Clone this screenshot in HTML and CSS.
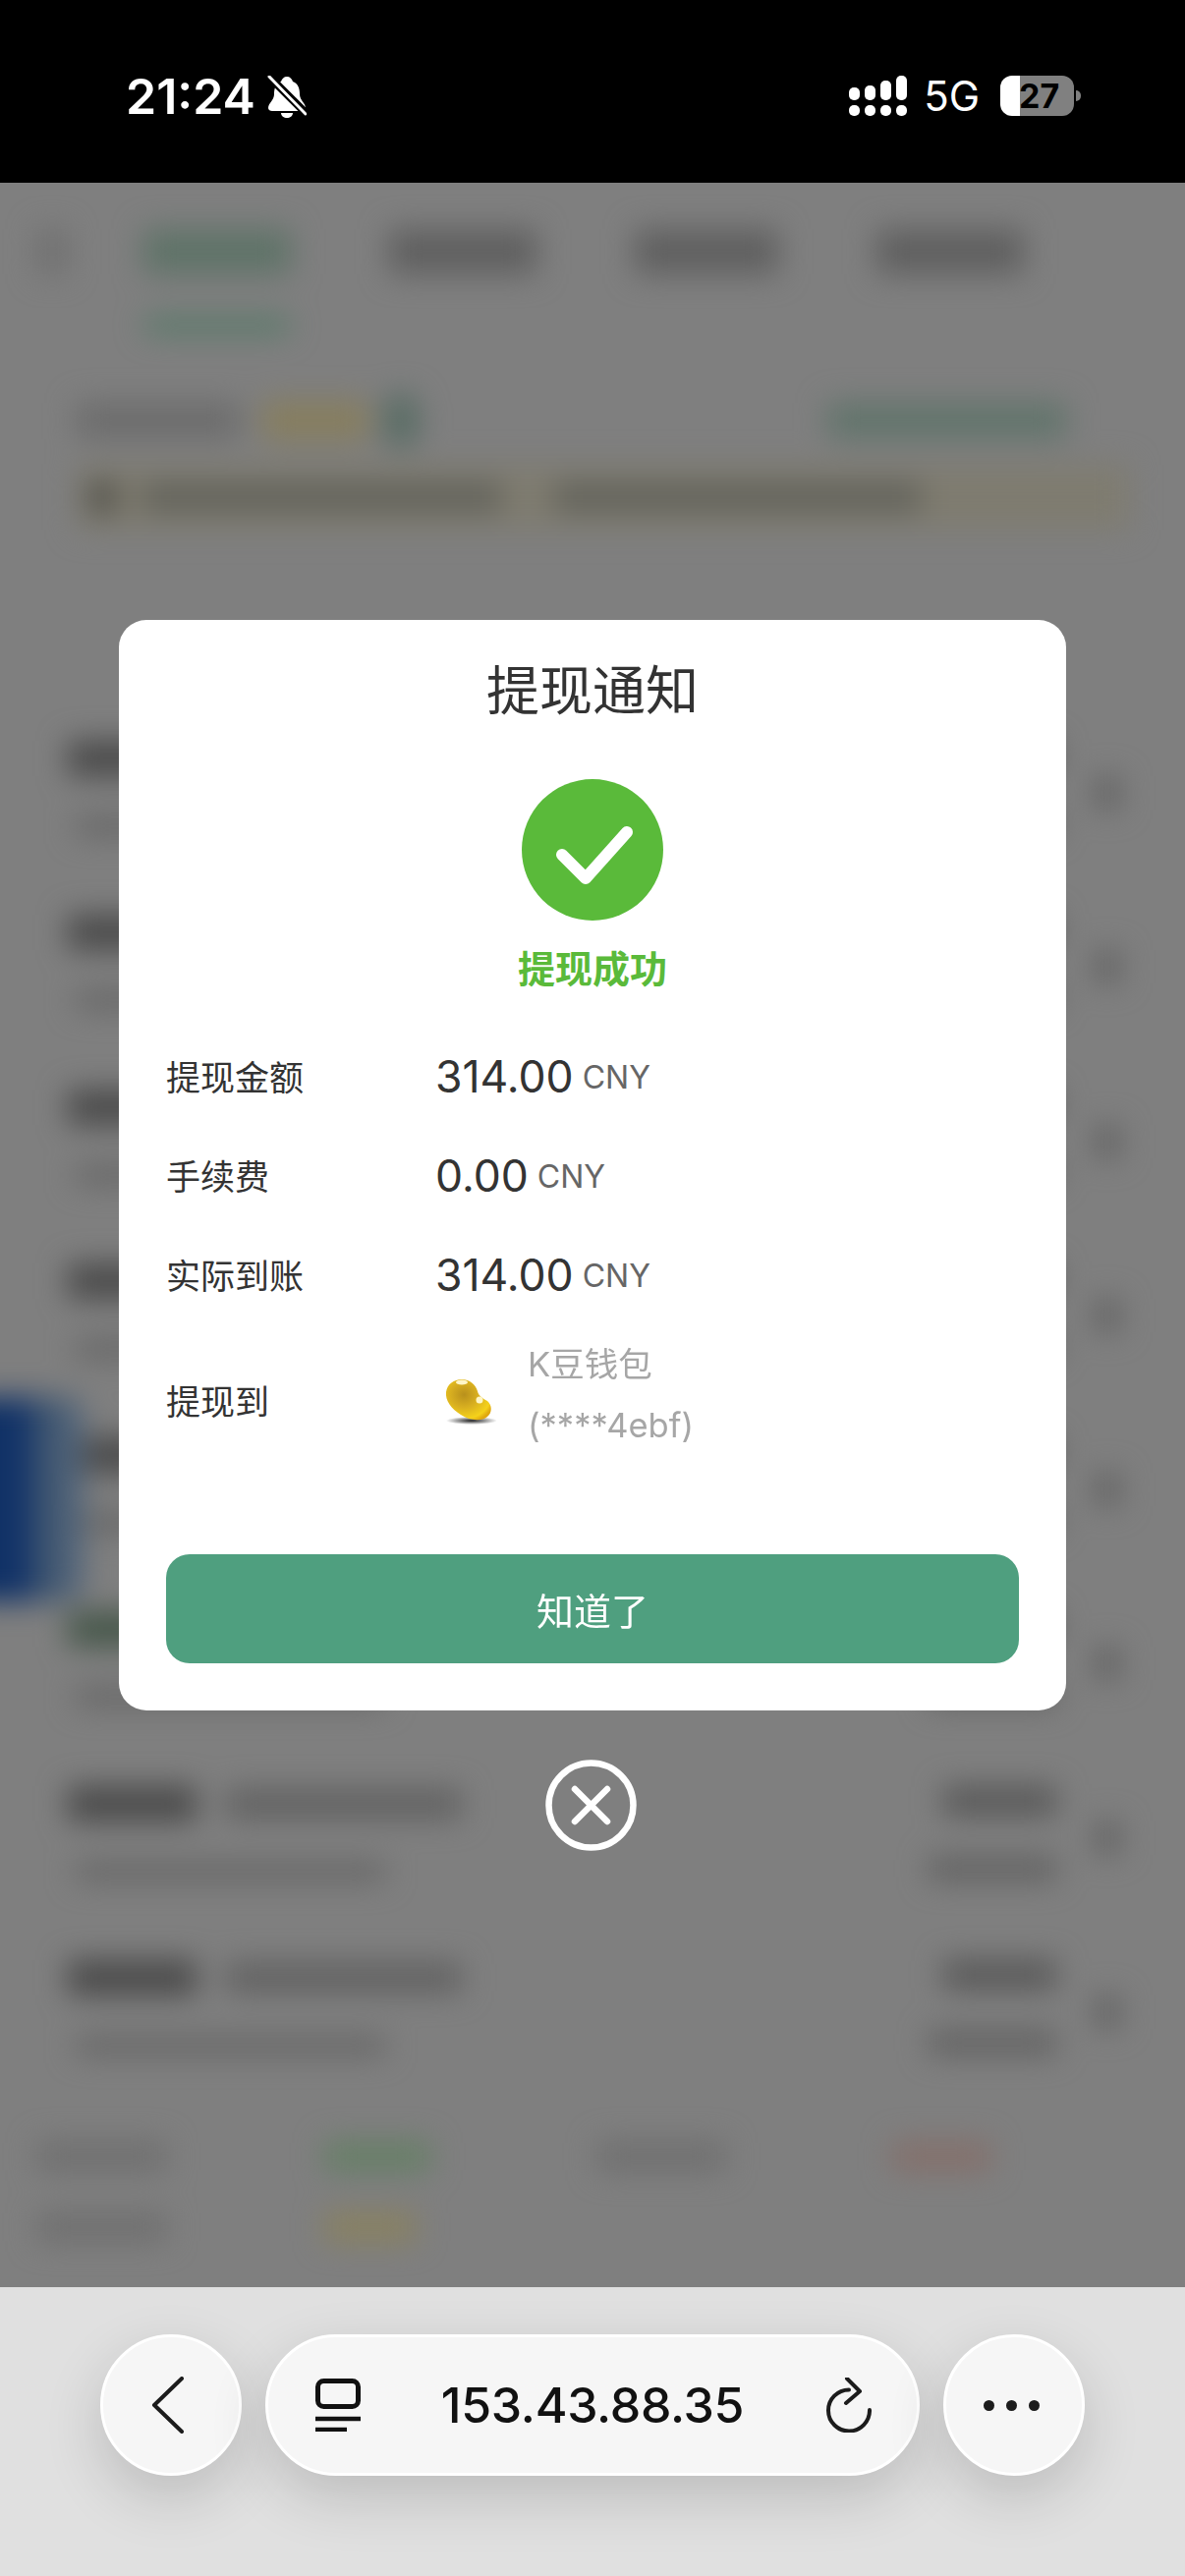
FILE: index.html
```html
<!DOCTYPE html>
<html lang="zh-CN">
    <head>
        <meta charset="UTF-8" />
        <meta name="viewport" content="width=device-width, initial-scale=1.0" />
        <title>提现通知</title>
        <link rel="stylesheet" href="styles.css">
    </head>
    <body>
        <header class="status-bar">
            <div class="status-left">
                <span class="clock">21:24</span>
                <svg class="bell" viewBox="0 0 40 43" width="40" height="43">
                    <path d="M20 1c3 0 5 2 6 5 6 2 7 8 7 13 0 6 6 9 6 14 0 2-2 3-4 3H5c-2 0-4-1-4-3 0-5 6-8 6-14 0-5 1-11 7-13 1-3 3-5 6-5z" fill="#fff"/>
                    <path d="M14 38h12c0 3-3 5-6 5s-6-2-6-5z" fill="#fff"/>
                    <path d="M1 0l39 39" stroke="#000" stroke-width="8"/>
                    <path d="M2 1l37 38" stroke="#fff" stroke-width="3" stroke-linecap="round"/>
                </svg>
            </div>
            <div class="status-right">
                <div class="signal">
                    <span class="signal-col"><i class="bar-1"></i><i class="dot"></i></span>
                    <span class="signal-col"><i class="bar-2"></i><i class="dot"></i></span>
                    <span class="signal-col"><i class="bar-3"></i><i class="dot"></i></span>
                    <span class="signal-col"><i class="bar-4"></i><i class="dot"></i></span>
                </div>
                <span class="network">5G</span>
                <div class="battery"><span class="battery-level">27</span></div>
                <span class="battery-nub"></span>
            </div>
        </header>

        <main class="page">
            <!-- page content dimmed and blurred behind the dialog -->
            <div class="backdrop">
                <div class="tabs">
                    <span class="tab-menu"></span>
                    <div class="tab tab-active"><span class="tab-label"></span><span class="tab-line"></span></div>
                    <div class="tab"><span class="tab-label"></span></div>
                    <div class="tab tab-short"><span class="tab-label"></span></div>
                    <div class="tab"><span class="tab-label"></span></div>
                </div>
                <section class="summary">
                    <div class="summary-head">
                        <span class="sk sk-name"></span>
                        <span class="sk sk-gold"></span>
                        <span class="sk sk-leaf"></span>
                        <span class="sk sk-link"></span>
                    </div>
                    <div class="notice">
                        <span class="sk notice-icon"></span>
                        <span class="sk notice-a"></span>
                        <span class="sk notice-b"></span>
                    </div>
                </section>
                <section class="records">
                    <div class="record"><div class="record-main"><div class="record-title"><span class="sk title-a"></span><span class="sk title-b"></span></div><span class="sk record-sub"></span></div><div class="record-side"><span class="sk side-a"></span><span class="sk side-b"></span></div><span class="sk record-arrow"></span></div>
                    <div class="record"><div class="record-main"><div class="record-title"><span class="sk title-a"></span><span class="sk title-b"></span></div><span class="sk record-sub"></span></div><div class="record-side"><span class="sk side-a"></span><span class="sk side-b"></span></div><span class="sk record-arrow"></span></div>
                    <div class="record"><div class="record-main"><div class="record-title"><span class="sk title-a"></span><span class="sk title-b"></span></div><span class="sk record-sub"></span></div><div class="record-side"><span class="sk side-a"></span><span class="sk side-b"></span></div><span class="sk record-arrow"></span></div>
                    <div class="record"><div class="record-main"><div class="record-title"><span class="sk title-a"></span><span class="sk title-b"></span></div><span class="sk record-sub"></span></div><div class="record-side"><span class="sk side-a"></span><span class="sk side-b"></span></div><span class="sk record-arrow"></span></div>
                    <div class="record"><div class="record-main"><div class="record-title"><span class="sk title-a"></span><span class="sk title-b"></span></div><span class="sk record-sub"></span></div><div class="record-side"><span class="sk side-a"></span><span class="sk side-b"></span></div><span class="sk record-arrow"></span></div>
                    <div class="record"><div class="record-main"><div class="record-title"><span class="sk title-a title-green"></span><span class="sk title-b"></span></div><span class="sk record-sub"></span></div><div class="record-side"><span class="sk side-a"></span><span class="sk side-b"></span></div><span class="sk record-arrow"></span></div>
                    <div class="record"><div class="record-main"><div class="record-title"><span class="sk title-a"></span><span class="sk title-b"></span></div><span class="sk record-sub"></span></div><div class="record-side"><span class="sk side-a"></span><span class="sk side-b"></span></div><span class="sk record-arrow"></span></div>
                    <div class="record"><div class="record-main"><div class="record-title"><span class="sk title-a"></span><span class="sk title-b"></span></div><span class="sk record-sub"></span></div><div class="record-side"><span class="sk side-a"></span><span class="sk side-b"></span></div><span class="sk record-arrow"></span></div>
                </section>
                <section class="legend">
                    <div class="legend-row">
                        <span class="sk legend-key"></span>
                        <span class="sk legend-green"></span>
                        <span class="sk legend-key2"></span>
                        <span class="sk legend-red"></span>
                    </div>
                    <div class="legend-row">
                        <span class="sk legend-key"></span>
                        <span class="sk legend-orange"></span>
                    </div>
                </section>
                <!-- floating service button at the screen edge -->
                <div class="float-tab"></div>
            </div>

            <div class="overlay">
                <div class="dialog">
                    <h2 class="dialog-title">提现通知</h2>
                    <svg class="success-icon" viewBox="0 0 144 144" width="144" height="144">
                        <circle cx="72" cy="72" r="72" fill="#5aba3a"/>
                        <path d="M41 77l24 24 42-47" fill="none" stroke="#fff" stroke-width="12" stroke-linecap="round" stroke-linejoin="round"/>
                    </svg>
                    <div class="success-text">提现成功</div>
                    <dl class="details">
                        <dt>提现金额</dt>
                        <dd><span class="amount">314.00</span><span class="unit">CNY</span></dd>
                        <dt>手续费</dt>
                        <dd><span class="amount">0.00</span><span class="unit">CNY</span></dd>
                        <dt>实际到账</dt>
                        <dd><span class="amount">314.00</span><span class="unit">CNY</span></dd>
                        <dt>提现到</dt>
                        <dd class="wallet">
                            <svg class="bean" viewBox="0 0 52 47" width="52" height="47">
                                <defs>
                                    <radialGradient id="beanFill" cx="40%" cy="38%" r="70%">
                                        <stop offset="0" stop-color="#b8901c"/>
                                        <stop offset="0.45" stop-color="#d9b020"/>
                                        <stop offset="0.85" stop-color="#f5d21a"/>
                                        <stop offset="1" stop-color="#e0a810"/>
                                    </radialGradient>
                                    <radialGradient id="beanShadow">
                                        <stop offset="0" stop-color="#222"/>
                                        <stop offset="1" stop-color="#222" stop-opacity="0"/>
                                    </radialGradient>
                                </defs>
                                <ellipse cx="27" cy="43" rx="26" ry="4" fill="url(#beanShadow)"/>
                                <path d="M17 1C25 1 31 6 33 13c1 5 5 7 10 10 5 4 5 12 0 16-6 5-18 4-27-2C6 31 0 22 1 14 2 6 9 1 17 1z" fill="url(#beanFill)"/>
                                <ellipse cx="17" cy="4" rx="6" ry="2.5" fill="#fff6c8"/>
                                <circle cx="35" cy="22" r="3.5" fill="#fff6c8"/>
                            </svg>
                            <span class="wallet-name">K豆钱包<br>(****4ebf)</span>
                        </dd>
                    </dl>
                    <button class="confirm">知道了</button>
                </div>
                <button class="close" aria-label="关闭">
                    <svg viewBox="0 0 93 93" width="93" height="93">
                        <circle cx="46.5" cy="46.5" r="43" fill="none" stroke="#fff" stroke-width="6.5"/>
                        <path d="M30 30l33 33M63 30L30 63" stroke="#fff" stroke-width="6.5" stroke-linecap="round"/>
                    </svg>
                </button>
            </div>
        </main>

        <nav class="browser-bar">
            <button class="round-btn">
                <svg class="back-icon" viewBox="0 0 34 58" width="34" height="58"><path d="M31 2L3 29l28 27" fill="none" stroke="#1c1c1c" stroke-width="4" stroke-linecap="round" stroke-linejoin="round"/></svg>
            </button>
            <div class="url-pill">
                <svg viewBox="0 0 46 54" width="46" height="54">
                    <rect x="2.5" y="2.5" width="41" height="26" rx="6" fill="none" stroke="#111" stroke-width="5"/>
                    <path d="M0 41h46" stroke="#111" stroke-width="4.5"/>
                    <path d="M0 52h32" stroke="#111" stroke-width="4.5"/>
                </svg>
                <span class="url-text">153.43.88.35</span>
                <svg viewBox="0 0 46 56" width="46" height="56">
                    <path d="M23 12.500A21 21 0 1 0 44 33" fill="none" stroke="#1c1c1c" stroke-width="4" stroke-linecap="round"/>
                    <path d="M21 1l13 13-14 12" fill="none" stroke="#1c1c1c" stroke-width="4" stroke-linecap="round" stroke-linejoin="round"/>
                </svg>
            </div>
            <button class="round-btn more-btn">
                <span class="more-dot"></span><span class="more-dot"></span><span class="more-dot"></span>
            </button>
        </nav>
    </body>
</html>
```

FILE: styles.css
```css
body {
    margin: 0;
    width: 1206px;
    height: 2622px;
    display: flex;
    flex-direction: column;
    overflow: hidden;
    font-family: Inter, "Noto Sans CJK SC", sans-serif;
    background: #808080;
}

/* status bar */
.status-bar {
    height: 186px;
    flex: none;
    background: #000;
    color: #fff;
    display: flex;
    justify-content: space-between;
    align-items: flex-start;
    padding: 77px 106px 0 128px;
    box-sizing: border-box;
}
.status-left {
    display: flex;
    align-items: center;
    gap: 12px;
}
.clock {
    font-size: 50px;
    font-weight: 600;
    line-height: 43px;
}
.status-right {
    display: flex;
    align-items: center;
    height: 41px;
}
.signal {
    display: flex;
    gap: 5px;
    margin-right: 17px;
}
.signal-col {
    width: 11px;
    height: 41px;
    display: flex;
    flex-direction: column;
    justify-content: flex-end;
    gap: 5px;
}
.signal-col i {
    display: block;
    background: #fff;
    border-radius: 5px;
}
.signal-col .dot { height: 11px; }
.signal-col .bar-1 { height: 13px; }
.signal-col .bar-2 { height: 15px; }
.signal-col .bar-3 { height: 20px; }
.signal-col .bar-4 { height: 25px; }
.network {
    font-size: 42px;
    font-weight: 400;
    margin-right: 21px;
}
.battery {
    width: 75px;
    height: 41px;
    border-radius: 12px;
    background: linear-gradient(90deg, #fff 0, #fff 20px, #808080 20px);
    color: #000;
    display: flex;
    align-items: center;
    padding-left: 19px;
    box-sizing: border-box;
}
.battery-level {
    font-size: 34px;
    font-weight: 700;
}
.battery-nub {
    width: 5px;
    height: 11px;
    margin-left: 2px;
    background: #808080;
    border-radius: 0 6px 6px 0;
}

/* dimmed page behind the dialog */
.page {
    flex: 1;
    position: relative;
    overflow: hidden;
    background: #7f7f7f;
}
.backdrop {
    filter: blur(15px);
    height: 100%;
    position: relative;
}
.sk {
    display: block;
    background: #5a5a5a;
}
.tabs {
    display: flex;
    padding: 47px 0 0 38px;
    height: 158px;
    box-sizing: border-box;
}
.tab-menu {
    width: 30px;
    height: 46px;
    margin-right: 78px;
    background: #707070;
}
.tab {
    width: 150px;
    margin-right: 100px;
}
.tab-short {
    width: 146px;
    margin-right: 100px;
}
.tab-label {
    display: block;
    height: 46px;
    background: #606060;
}
.tab-active .tab-label { background: #5f7368; }
.tab-line {
    display: block;
    height: 14px;
    margin-top: 45px;
    background: #4d7963;
    border-radius: 7px;
}
.summary {
    padding: 54px 121px 0 78px;
    height: 376px;
    box-sizing: border-box;
}
.summary-head {
    display: flex;
    align-items: center;
    height: 60px;
}
.sk-name { width: 166px; height: 36px; background: #6c6c6c; }
.sk-gold { width: 108px; height: 40px; margin-left: 23px; background: #877e5e; }
.sk-leaf { width: 36px; height: 56px; margin-left: 15px; background: #586c64; border-radius: 18px; }
.sk-link { width: 243px; height: 36px; margin-left: auto; background: #61746b; }
.notice {
    display: flex;
    align-items: center;
    gap: 26px;
    height: 66px;
    margin-top: 15px;
    padding-left: 11px;
    background: #7f7c70;
    width: 1060px;
}
.notice-icon { width: 30px; height: 34px; background: #56554f; }
.notice-a { width: 365px; height: 30px; background: #63635c; }
.notice-b { width: 373px; height: 30px; margin-left: 28px; background: #63635c; }
.records {
    display: flex;
    flex-direction: column;
}
.record {
    height: 177.300px;
    display: flex;
    align-items: flex-start;
    box-sizing: border-box;
    padding: 34px 66px 0 69px;
}
.record-main { flex: 1; }
.record-title {
    display: flex;
    gap: 30px;
    height: 36px;
}
.title-a { width: 131px; background: #4a4a4a; }
.title-green { background: #46574a; }
.title-b { width: 240px; height: 30px; margin-top: 3px; background: #616161; }
.record-sub {
    width: 315px;
    height: 18px;
    margin: 42px 0 0 8px;
    background: #646464;
}
.record-side {
    width: 135px;
    display: flex;
    flex-direction: column;
    align-items: flex-end;
    margin-right: 39px;
}
.side-a { width: 115px; height: 30px; background: #585858; }
.side-b { width: 130px; height: 24px; margin-top: 42px; background: #616161; }
.record-arrow {
    width: 26px;
    height: 34px;
    margin-top: 36px;
    background: #636363;
}
.legend {
    margin-top: 42px;
    padding-left: 38px;
}
.legend-row {
    display: flex;
    align-items: center;
    height: 30px;
    margin-bottom: 42px;
}
.legend-key { width: 131px; height: 30px; background: #6f6f6f; }
.legend-green { width: 108px; height: 30px; margin-left: 161px; background: #657f65; }
.legend-key2 { width: 130px; height: 30px; margin-left: 170px; background: #6f6f6f; }
.legend-red { width: 100px; height: 30px; margin-left: 170px; background: #846f6a; }
.legend-orange { width: 93px; height: 30px; margin-left: 161px; background: #89815f; }
.float-tab {
    position: absolute;
    left: -40px;
    top: 1236px;
    width: 125px;
    height: 208px;
    border-radius: 20px;
    background: linear-gradient(90deg, #0e2f60 0, #12336a 50%, #40566f 68%, #55687e 100%);
}

/* withdrawal dialog */
.overlay {
    position: absolute;
    inset: 0;
    display: flex;
    flex-direction: column;
    align-items: center;
    justify-content: center;
}
.dialog {
    width: 964px;
    height: 1110px;
    background: #fff;
    border-radius: 28px;
    padding: 36px 48px 0;
    box-sizing: border-box;
    display: flex;
    flex-direction: column;
    align-items: center;
}
.dialog-title {
    margin: 0;
    font-size: 54px;
    font-weight: 400;
    line-height: 74px;
    color: #333;
}
.success-icon {
    margin-top: 52px;
    flex: none;
}
.success-text {
    margin-top: 24px;
    font-size: 38px;
    font-weight: 700;
    line-height: 50px;
    color: #5aba3a;
}
.details {
    margin: 35px 0 0;
    width: 100%;
    display: grid;
    grid-template-columns: 274px 1fr;
    grid-template-rows: 101px 101px 101px 154px;
    align-items: center;
}
.details dt {
    font-size: 35px;
    color: #333;
    padding-bottom: 3px;
}
.details dd {
    margin: 0;
    display: flex;
    align-items: center;
    gap: 9px;
}
.amount {
    font-size: 44.500px;
    color: #333;
}
.unit {
    font-size: 32px;
    color: #666;
}
.details .wallet {
    align-items: center;
    gap: 32px;
}
.bean {
    margin: 2px 0 0 10px;
    flex: none;
}
.wallet-name {
    font-size: 34.500px;
    line-height: 62px;
    color: #a6a6a6;
    margin-bottom: 12px;
}
.confirm {
    width: 100%;
    height: 111px;
    margin-top: 79px;
    flex: none;
    background: #4f9f7f;
    color: #fff;
    border: none;
    border-radius: 24px;
    font: 38px Inter, "Noto Sans CJK SC", sans-serif;
}
.close {
    margin: 50px 3px 0 0;
    padding: 0;
    width: 93px;
    height: 93px;
    background: none;
    border: none;
}

/* browser toolbar */
.browser-bar {
    height: 294px;
    flex: none;
    background: #e0e0e0;
    display: flex;
    justify-content: center;
    align-items: flex-start;
    gap: 24px;
    padding-top: 48px;
    box-sizing: border-box;
}
.round-btn {
    width: 144px;
    height: 144px;
    padding: 0;
    display: flex;
    align-items: center;
    justify-content: center;
    gap: 12px;
    border-radius: 50%;
    border: 3px solid #fff;
    background: #f6f6f6;
    box-sizing: border-box;
    box-shadow: 0 22px 60px rgba(0, 0, 0, 0.16);
}
.back-icon { margin-right: 6px; }
.more-btn { padding-right: 5px; }
.url-pill {
    width: 666px;
    height: 144px;
    display: flex;
    align-items: center;
    justify-content: space-between;
    padding: 0 46px 0 48px;
    border-radius: 72px;
    border: 3px solid #fff;
    background: #f6f6f6;
    box-sizing: border-box;
    box-shadow: 0 22px 60px rgba(0, 0, 0, 0.16);
}
.url-text {
    font-size: 50px;
    font-weight: 500;
    letter-spacing: -0.3px;
    margin-left: -2px;
    color: #111;
}
.more-dot {
    width: 11px;
    height: 11px;
    border-radius: 50%;
    background: #1c1c1c;
}
```
